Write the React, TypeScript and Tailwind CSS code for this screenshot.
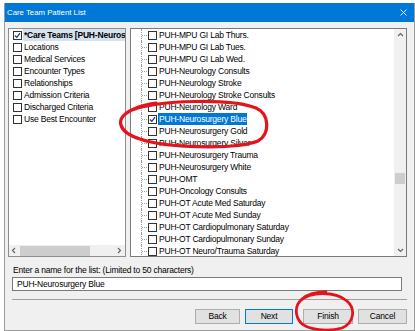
import React from "react";

const leftItems = [
  "*Care Teams [PUH-Neurosurgery Blue]",
  "Locations",
  "Medical Services",
  "Encounter Types",
  "Relationships",
  "Admission Criteria",
  "Discharged Criteria",
  "Use Best Encounter",
];

const rightItems = [
  "PUH-MPU GI Lab Thurs.",
  "PUH-MPU GI Lab Tues.",
  "PUH-MPU GI Lab Wed.",
  "PUH-Neurology Consults",
  "PUH-Neurology Stroke",
  "PUH-Neurology Stroke Consults",
  "PUH-Neurology Ward",
  "PUH-Neurosurgery Blue",
  "PUH-Neurosurgery Gold",
  "PUH-Neurosurgery Silver",
  "PUH-Neurosurgery Trauma",
  "PUH-Neurosurgery White",
  "PUH-OMT",
  "PUH-Oncology Consults",
  "PUH-OT Acute Med Saturday",
  "PUH-OT Acute Med Sunday",
  "PUH-OT Cardiopulmonary Saturday",
  "PUH-OT Cardiopulmonary Sunday",
  "PUH-OT Neuro/Trauma Saturday",
];

function Check({ checked }: { checked?: boolean }) {
  return (
    <div className="w-[9px] h-[9px] shrink-0 border border-[#333333] bg-white flex items-center justify-center">
      {checked && (
        <svg width="7" height="7" viewBox="0 0 7 7">
          <path d="M1 3.5 L2.8 5.3 L6 1.2" stroke="#1c2f8f" strokeWidth="1.2" fill="none" />
        </svg>
      )}
    </div>
  );
}

function Chevron({ dir }: { dir: "up" | "down" | "left" | "right" }) {
  const d =
    dir === "up"
      ? "M1 4 L3.5 1.5 L6 4"
      : dir === "down"
      ? "M1 2 L3.5 4.5 L6 2"
      : dir === "left"
      ? "M4 1 L1.5 3.5 L4 6"
      : "M2 1 L4.5 3.5 L2 6";
  return (
    <svg width="7" height="7" viewBox="0 0 7 7">
      <path d={d} stroke="#606060" strokeWidth="1.1" fill="none" />
    </svg>
  );
}

function Btn({ label, w, primary }: { label: string; w: string; primary?: boolean }) {
  return (
    <div
      className={`${w} h-[15px] flex items-center justify-center bg-[#e1e1e1] text-[8.5px] tracking-[-0.2px] text-black border ${
        primary ? "border-[#0078d7]" : "border-[#adadad]"
      }`}
    >
      {label}
    </div>
  );
}

export default function App() {
  return (
    <div className="w-[415px] h-[331px] bg-white relative overflow-hidden font-['Liberation_Sans',Arial,sans-serif]">
      <div className="ml-[4px] mt-[3px] w-[411px] h-[328px] border-x border-b border-[#9a9a9a] bg-[#f0f0f0] flex flex-col">
        {/* title bar */}
        <div className="h-[19px] shrink-0 bg-[#0078d7] flex items-center justify-between pl-[2px] pr-[7px]">
          <span className="text-white text-[7.8px] leading-none">Care Team Patient List</span>
          <svg width="7" height="7" viewBox="0 0 7 7">
            <path d="M0.5 0.5 L6.5 6.5 M6.5 0.5 L0.5 6.5" stroke="white" strokeWidth="0.9" />
          </svg>
        </div>

        {/* body */}
        <div className="flex-1 flex flex-col pl-[3px] pr-[7px] pt-[6px]">
          <div className="flex gap-[4px] h-[229px] shrink-0">
            {/* left panel */}
            <div className="w-[118px] border border-[#8d8d8d] bg-white flex flex-col">
              <div className="flex-1 overflow-hidden pl-[4px] text-[8.5px] tracking-[-0.2px] leading-[12px] text-black">
                {leftItems.map((t, i) => (
                  <div key={t} className="h-[12px] flex items-center whitespace-nowrap">
                    <Check checked={i === 0} />
                    <div
                      className={`ml-[1px] pl-[1px] flex-1 min-w-0 overflow-hidden ${
                        i === 0 ? "bg-[#d6e2ef] font-bold" : ""
                      }`}
                    >
                      {t}
                    </div>
                  </div>
                ))}
              </div>
              <div className="h-[11px] shrink-0 bg-[#f0f0f0] flex items-center">
                <div className="w-[11px] flex justify-center">
                  <Chevron dir="left" />
                </div>
                <div className="w-[70px] h-[10px] bg-[#cdcdcd]" />
                <div className="flex-1" />
                <div className="w-[11px] flex justify-center">
                  <Chevron dir="right" />
                </div>
              </div>
            </div>

            {/* right panel */}
            <div className="flex-1 border border-[#7a7a7a] bg-white flex">
              <div className="flex-1 overflow-hidden text-[8.5px] tracking-[-0.2px] leading-[12px] text-black">
                {rightItems.map((t, i) => {
                  const sel = i === 7;
                  return (
                    <div key={t} className="h-[12px] flex items-center whitespace-nowrap">
                      <div className="w-[17px] h-[12px] relative shrink-0">
                        <div className="absolute left-[10px] top-0 bottom-0 border-l border-dotted border-[#a0a0a0]" />
                        <div className="absolute left-[11px] top-[6px] w-[5px] border-t border-dotted border-[#a0a0a0]" />
                      </div>
                      <Check checked={sel} />
                      <span
                        className={`ml-[1px] px-[1px] ${sel ? "bg-[#0078d7] text-white" : ""}`}
                      >
                        {t}
                      </span>
                    </div>
                  );
                })}
              </div>
              <div className="w-[12px] shrink-0 bg-[#f0f0f0] flex flex-col items-center">
                <div className="h-[12px] flex items-center">
                  <Chevron dir="up" />
                </div>
                <div className="mt-[132px] w-[10px] h-[11px] bg-[#cdcdcd]" />
                <div className="flex-1" />
                <div className="h-[12px] flex items-center">
                  <Chevron dir="down" />
                </div>
              </div>
            </div>
          </div>

          <div className="mt-[8px] ml-[5px] h-[11px] text-[8.5px] tracking-[-0.2px] leading-[11px] text-black">
            Enter a name for the list: (Limited to 50 characters)
          </div>
          <div className="mt-[1px] ml-[4px] w-[390px] h-[14px] bg-white border border-[#7a7a7a] flex items-center pl-[4px] text-[8.5px] tracking-[-0.2px] text-black">
            PUH-Neurosurgery Blue
          </div>
          <div className="mt-[8px] ml-[4px] h-px bg-[#a0a0a0]" />
          <div className="mt-[9px] flex justify-end">
            <Btn label="Back" w="w-[45px]" />
            <div className="w-[5px]" />
            <Btn label="Next" w="w-[48px]" primary />
            <div className="w-[10px]" />
            <Btn label="Finish" w="w-[50px]" />
            <div className="w-[5px]" />
            <Btn label="Cancel" w="w-[49px]" />
          </div>
        </div>
      </div>

      <svg className="absolute left-0 top-0 pointer-events-none" width="415" height="331" viewBox="0 0 415 331">
        <path
          d="M 132 110 C 160 100, 230 98, 256 108 C 270 114, 270 134, 258 141 C 235 150, 165 148, 140 139 C 118 132, 113 118, 134 109 C 140 106, 148 104, 156 103"
          stroke="#e3141c"
          strokeWidth="3.2"
          fill="none"
          strokeLinecap="round"
        />
        <path
          d="M 300 301 C 310 291, 335 291, 347 301 C 356 309, 354 323, 342 328 C 328 332, 308 330, 301 323 C 295 316, 294 306, 302 299 C 308 294, 318 292, 326 292"
          stroke="#e3141c"
          strokeWidth="2.8"
          fill="none"
          strokeLinecap="round"
        />
      </svg>
    </div>
  );
}
